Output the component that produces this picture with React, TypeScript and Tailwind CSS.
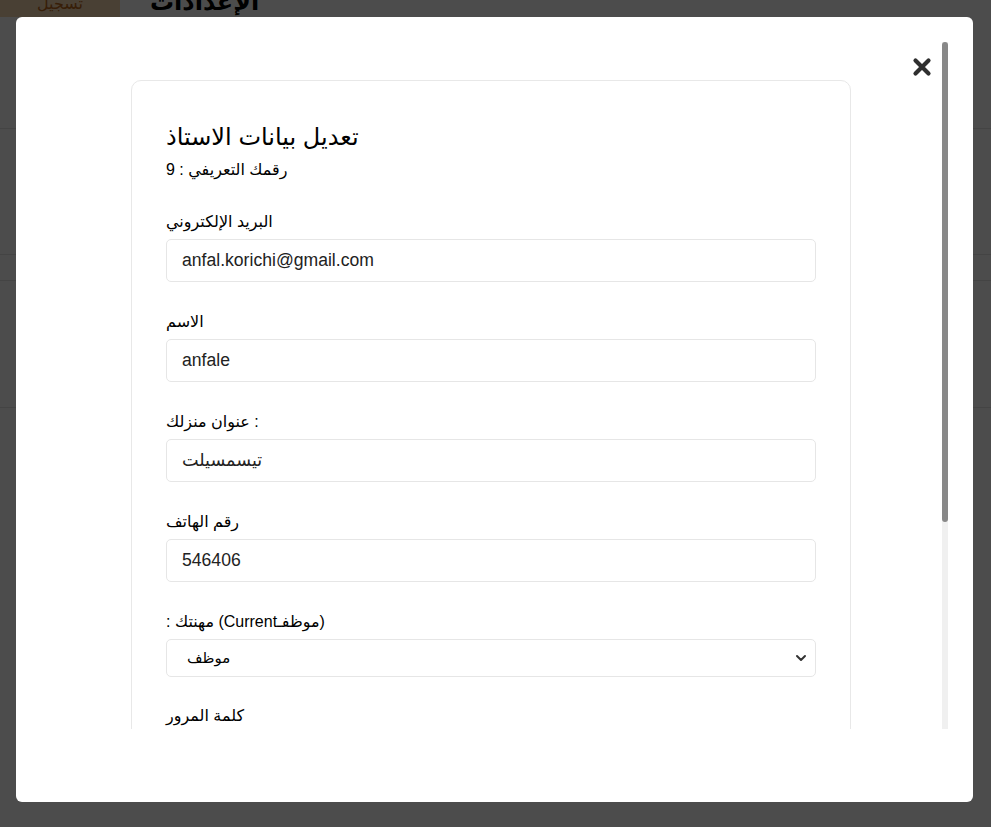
import { ChevronDown } from 'lucide-react';

const font = { fontFamily: '"Liberation Sans", "DejaVu Sans", Arial, sans-serif' };

const fields = [
  { label: 'البريد الإلكتروني', value: 'anfal.korichi@gmail.com' },
  { label: 'الاسم', value: 'anfale' },
  { label: 'عنوان منزلك :', value: 'تيسمسيلت' },
  { label: 'رقم الهاتف', value: '546406' },
];

function Backdrop() {
  // page sitting behind the dark overlay
  return (
    <div className="min-h-screen bg-white">
      <div className="flex h-[17px] items-end overflow-hidden">
        <div className="flex h-full w-[120px] items-end justify-center bg-[#f5d6ae] text-[16px] leading-[26px] text-[#b8651a]">
          تسجيل
        </div>
        <div className="ml-[30px] text-[24px] font-bold leading-[30px] text-black">الإعدادات</div>
      </div>
      <div className="flex flex-col">
        <div className="h-[112px] border-b border-[#e3e3e3]" />
        <div className="h-[126px] border-b border-[#e3e3e3]" />
        <div className="h-[26px] border-b border-[#e3e3e3]" />
        <div className="h-[127px] border-b border-[#e3e3e3]" />
      </div>
    </div>
  );
}

export default function App() {
  return (
    <div style={font} className="relative min-h-screen">
      <Backdrop />

      <div className="fixed inset-0 bg-black/70 pl-[16px] pt-[17px]">
        <div className="relative h-[785px] w-[957px] rounded-[6px] bg-white pl-[24px] pr-[25px] pt-[25px]">
          {/* close */}
          <button className="absolute right-[41px] top-[40px] z-10 flex h-[20px] w-[20px] items-center justify-center">
            <svg viewBox="0 0 20 20" className="h-[20px] w-[20px]">
              <path d="M3.5 3.5 L16.5 16.5 M16.5 3.5 L3.5 16.5" stroke="#2f2f2f" strokeWidth="4.2" strokeLinecap="round" />
            </svg>
          </button>

          <div className="flex h-[687px]">
            <div className="h-full w-[902px] overflow-hidden">
              <div className="mx-auto mt-[38px] w-[720px] rounded-[10px] border border-[#e8e8e8] px-[34px] pb-[35px] pt-[40px]">
                <h2 className="text-[24px] leading-[32px] text-black">تعديل بيانات الاستاذ</h2>
                <p className="mb-[28px] mt-[5px] text-[16px] leading-[24px] text-black">رقمك التعريفي : 9</p>

                {fields.map((f) => (
                  <div key={f.label} className="mb-[28px]">
                    <label className="mb-[5px] block text-[16px] leading-[24px] text-black">{f.label}</label>
                    <input
                      defaultValue={f.value}
                      className="block h-[43px] w-full rounded-[5px] border border-[#e6e6e6] px-[15px] text-[17.6px] text-[#222] outline-none"
                    />
                  </div>
                ))}

                <div className="mb-[27px]">
                  <label className="mb-[5px] block text-[16px] leading-[24px] text-black">: مهنتك (Currentموظفـ)</label>
                  <div className="relative">
                    <select className="block h-[38px] w-full appearance-none rounded-[5px] border border-[#e6e6e6] bg-white pl-[20px] text-[15px] text-black outline-none">
                      <option>موظف</option>
                      <option>أستاذ</option>
                    </select>
                    <ChevronDown className="pointer-events-none absolute right-[7px] top-[11px] h-[16px] w-[16px] text-[#333]" strokeWidth={3} />
                  </div>
                </div>

                <div>
                  <label className="mb-[5px] block text-[16px] leading-[24px] text-black">كلمة المرور</label>
                  <input
                    type="password"
                    defaultValue="123456"
                    className="block h-[43px] w-full rounded-[5px] border border-[#e6e6e6] px-[15px] text-[17.6px] text-[#222] outline-none"
                  />
                </div>
              </div>
            </div>

            {/* scrollbar */}
            <div className="h-full w-[6px] bg-[#f0f0f0]">
              <div className="h-[480px] w-full rounded-[3px] bg-[#888888]" />
            </div>
          </div>
        </div>
      </div>
    </div>
  );
}
